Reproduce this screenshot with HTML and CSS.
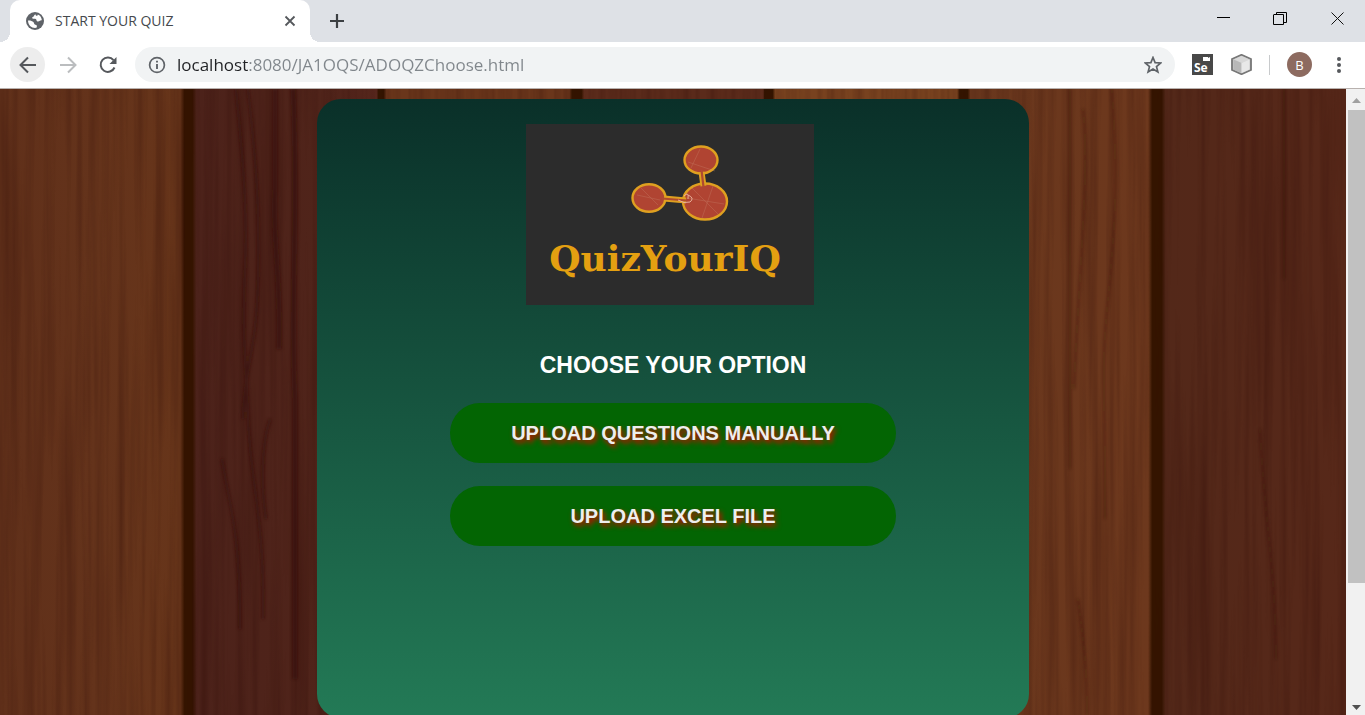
FILE: index.html
```html
<!DOCTYPE html>
<html lang="en">
<head>
<meta charset="utf-8">
<meta name="viewport" content="width=device-width, initial-scale=1">
<title>START YOUR QUIZ</title>
<link rel="stylesheet" href="styles.css">
</head>
<body>
<div class="browser">
  <header class="tab-strip">
    <div class="tab">
      <svg class="icon-18" viewBox="0 0 18 18" aria-hidden="true"><circle cx="9" cy="9" r="9" fill="#5f6368"/><path d="M9.500 2.200C7.500 3 8.500 4.300 6.800 5C5.600 5.500 6 6.700 7.300 6.700C9 6.600 10.400 6.700 10.500 8.200C10.600 9.500 12.500 9.800 13.500 9C14.500 8.200 15.500 8.500 15.800 8C15.600 5.500 14 3.500 11.800 2.600C11.700 4.500 9.500 4 9.500 2.200ZM2 8.500C4 8.200 6.200 8.800 7.400 10C8.500 11.200 7.800 12.500 9.300 12.700C11 12.800 11.300 14 10.500 15.800C6 16.600 2 13.500 2 8.500Z" fill="#fff"/></svg>
      <span class="tab-title">START YOUR QUIZ</span>
      <button class="plain" aria-label="Close tab"><svg class="icon-18" viewBox="0 0 18 18"><path d="M4.500 4.500L13.500 13.500M13.500 4.500L4.500 13.500" stroke="#55585c" stroke-width="1.800"/></svg></button>
    </div>
    <button class="plain new-tab" aria-label="New tab"><svg class="icon-18" viewBox="0 0 18 18"><path d="M2 9H16M9 2V16" stroke="#3c4043" stroke-width="2.200"/></svg></button>
    <div class="window-controls">
      <button class="plain" aria-label="Minimize"><svg class="icon-14" viewBox="0 0 14 14"><path d="M0 6.500H13" stroke="#000"/></svg></button>
      <button class="plain" aria-label="Restore"><svg class="icon-14" viewBox="0 0 14 14"><path d="M0 3.500H9.500V13.500H-.5V3.500M2.500 3V1.500H12.500V11.500H10" fill="none" stroke="#000"/></svg></button>
      <button class="plain" aria-label="Close"><svg class="icon-14" viewBox="0 0 14 14"><path d="M.5 1.500L12.500 13.500M12.500 1.500L.5 13.500" stroke="#111"/></svg></button>
    </div>
  </header>
  <nav class="toolbar" aria-label="Browser">
    <div class="nav-buttons">
      <button class="plain round current" aria-label="Back"><svg class="icon-18" viewBox="0 0 18 18"><path d="M17 9H2M9 1.500L1.500 9L9 16.500" fill="none" stroke="#55585c" stroke-width="2"/></svg></button>
      <button class="plain round" aria-label="Forward"><svg class="icon-18" viewBox="0 0 18 18"><path d="M1 9H16M9 1.500L16.500 9L9 16.500" fill="none" stroke="#bbbdbf" stroke-width="2"/></svg></button>
      <button class="plain round" aria-label="Reload"><svg class="icon-18" viewBox="0 0 18 18"><path d="M15.500 11.500A7.200 7.200 0 1 1 14.500 4.200" fill="none" stroke="#55585c" stroke-width="2"/><path d="M17.500 1V8H10.500Z" fill="#55585c"/></svg></button>
    </div>
    <div class="address">
      <svg class="icon-18" viewBox="0 0 18 18" aria-hidden="true"><circle cx="9" cy="9" r="7.400" fill="none" stroke="#5f6368" stroke-width="1.700"/><path d="M9 8V13M9 4.800V6.600" stroke="#5f6368" stroke-width="1.900"/></svg>
      <input class="url" type="text" aria-label="Address" value="localhost:8080/JA1OQS/ADOQZChoose.html">
      <button class="plain" aria-label="Bookmark"><svg class="icon-18" viewBox="0 0 18 18"><path d="M9 1.500L11.100 6.600L16.800 7L12.500 10.600L13.900 16L9 13.100L4.100 16L5.500 10.600L1.200 7L6.900 6.600Z" fill="none" stroke="#5f6368" stroke-width="1.700"/></svg></button>
    </div>
    <div class="extensions">
      <button class="plain" aria-label="Selenium"><svg class="icon-21" viewBox="0 0 21 21"><path d="M0 0H21V21H0Z" fill="#484848"/><path d="M11 3H16V4L18 3V7H11Z" fill="#fff"/><text x="2" y="18" class="selenium">Se</text></svg></button>
      <button class="plain" aria-label="Extension"><svg class="icon-21" viewBox="0 0 21 21"><path d="M10.500 .8L20 5V16L10.500 20.200L1 16V5Z" fill="#c9c9c9" stroke="#777" stroke-width="1.800"/><path d="M10.500 2L18.500 5.400L10.500 9L2.500 5.400Z" fill="#d8d8d8"/><path d="M10.500 9V19L2.500 15.500V5.600Z" fill="#b8b8b8"/><path d="M10.500 9L18.500 5.600V15.500L10.500 19Z" fill="#e8e8e8"/></svg></button>
      <span class="divider"></span>
      <button class="plain avatar" aria-label="Profile">B</button>
      <button class="plain menu" aria-label="Menu"><svg class="icon-18" viewBox="0 0 18 18" fill="#55585c"><circle cx="9" cy="3" r="2"/><circle cx="9" cy="9" r="2"/><circle cx="9" cy="15" r="2"/></svg></button>
    </div>
  </nav>
  <div class="viewport">
    <main class="page">
      <svg class="wood" viewBox="0 0 1346 626" preserveAspectRatio="none" aria-hidden="true">
        <defs>
          <filter id="grain" x="0" y="0" width="100%" height="100%" color-interpolation-filters="sRGB">
            <feTurbulence type="fractalNoise" baseFrequency="0.11 0.003" numOctaves="3" seed="8"/>
            <feColorMatrix values="0 0 0 0 .18  0 0 0 0 .04  0 0 0 0 .02  1 0 0 0 -.38"/>
          </filter>
          <linearGradient id="planks" gradientUnits="userSpaceOnUse" x1="0" y1="0" x2="1346" y2="0">
            <stop offset="0" stop-color="#60301a"/><stop offset=".07" stop-color="#64331b"/><stop offset=".134" stop-color="#67351a"/><stop offset=".137" stop-color="#351400"/><stop offset=".143" stop-color="#351400"/><stop offset=".146" stop-color="#4c221a"/><stop offset=".24" stop-color="#50241a"/><stop offset=".28" stop-color="#57271d"/><stop offset=".281" stop-color="#341500"/><stop offset=".285" stop-color="#341500"/><stop offset=".287" stop-color="#6a361b"/><stop offset=".423" stop-color="#6a361b"/><stop offset=".425" stop-color="#341500"/><stop offset=".432" stop-color="#341500"/><stop offset=".434" stop-color="#5b2b1b"/><stop offset=".567" stop-color="#5b2b1b"/><stop offset=".568" stop-color="#341500"/><stop offset=".574" stop-color="#341500"/><stop offset=".576" stop-color="#78421f"/><stop offset=".711" stop-color="#78421f"/><stop offset=".713" stop-color="#341500"/><stop offset=".719" stop-color="#341500"/><stop offset=".721" stop-color="#69371d"/><stop offset=".853" stop-color="#6d381d"/><stop offset=".856" stop-color="#341500"/><stop offset=".863" stop-color="#341500"/><stop offset=".866" stop-color="#532819"/><stop offset="1" stop-color="#572819"/>
          </linearGradient>
          <filter id="soft" x="-5%" width="110%"><feGaussianBlur stdDeviation="1.500"/></filter>
        </defs>
        <path d="M0 0H1346V626H0Z" fill="url(#planks)"/>
        <g filter="url(#grain)" opacity=".6"><path d="M0 0H1346V626H0Z"/></g>
        <path d="M185 0H192V626H185ZM1152 0H1162V626H1152Z" fill="#351400" opacity=".7"/>
        <g fill="none" stroke="#350d08" stroke-width="3" opacity=".6" filter="url(#soft)">
          <path d="M236 0C241 55 248 110 245 180S246 270 248 330S265 430 263 530M248 0C255 65 260 110 258 190S245 270 243 330"/>
          <path d="M275 0V100C272 150 281 180 279 260M293 0C299 130 290 210 295 310V590" stroke-width="5"/>
          <path d="M270 330C260 360 262 405 266 430M222 370C230 420 240 440 240 540"/>
          <path d="M1083 20C1090 80 1079 180 1074 300M1112 0C1118 90 1116 130 1108 210S1106 300 1105 430M1070 0V380M1078 510C1083 550 1087 570 1087 626M1284 0V190M1260 340C1265 440 1275 470 1276 570" stroke-width="2" opacity=".7"/>
        </g>
      </svg>
      <section class="panel">
        <div class="logo">
          <svg class="molecule" viewBox="0 0 100 78" aria-hidden="true">
            <g fill="#b04432" stroke="#dfa020" stroke-width="2.400"><ellipse cx="71" cy="16" rx="16.500" ry="13.500"/><ellipse cx="19" cy="54" rx="16.500" ry="13.800"/><ellipse cx="75" cy="57.500" rx="22" ry="18"/></g>
            <path d="M71.500 28L73.500 42M34 54.500L56 56.500" stroke="#dfa020" stroke-width="6"/><path d="M71.500 26L73.500 43M32 54.500L57 56.500" stroke="#b04a30" stroke-width="2.200"/>
            <path d="M70 5L61 24M58 18L85 27M11 44L28 61M7 51L30 56M83 42L72 74M57 54L94 60M62 44L88 70" stroke="#d29b82" stroke-width=".6" opacity=".4"/>
            <path d="M48 56Q54 60 60 58Q65 54 58 51M54 52Q59 47 58 55" fill="none" stroke="#e9b19b"/>
          </svg>
          <span class="brand">QuizYourIQ</span>
        </div>
        <h1 class="heading">CHOOSE YOUR OPTION</h1>
        <div class="options">
          <button class="option">UPLOAD QUESTIONS MANUALLY</button>
          <button class="option">UPLOAD EXCEL FILE</button>
        </div>
      </section>
    </main>
    <div class="scrollbar" aria-hidden="true">
      <svg class="arrow" viewBox="0 0 17 21"><path d="M4 14L8.500 9L13 14Z" fill="#a0a0a0"/></svg>
      <div class="track"><div class="thumb"></div></div>
      <svg class="arrow" viewBox="0 0 17 21"><path d="M4 11L8.500 16L13 11Z" fill="#505050"/></svg>
    </div>
  </div>
</div>
</body>
</html>
```
FILE: styles.css
```css
* { box-sizing: border-box; }
body { margin: 0; font-family: "Open Sans", "Noto Sans", sans-serif; }
svg { display: block; flex: none; }
.browser { display: flex; flex-direction: column; height: 100vh; overflow: hidden; }
.plain { display: flex; align-items: center; justify-content: center; padding: 0; border: 0; background: transparent; color: inherit; font: inherit; }
.icon-14 { width: 14px; height: 14px; overflow: visible; }
.icon-18 { width: 18px; height: 18px; }
.icon-21 { width: 21px; height: 21px; }

.tab-strip { display: flex; flex: none; height: 42px; padding-left: 10px; background: #dee1e6; }
.tab { position: relative; display: flex; align-items: center; gap: 11px; width: 300px; padding: 0 11px 0 16px; border-radius: 10px 10px 0 0; background: #fff; }
.tab::before, .tab::after { content: ""; position: absolute; bottom: 0; width: 10px; height: 10px; }
.tab::before { right: 100%; background: radial-gradient(circle at 0 0, transparent 10px, #fff 10px); }
.tab::after { left: 100%; background: radial-gradient(circle at 100% 0, transparent 10px, #fff 10px); }
.tab-title { flex: 1; padding-bottom: 2px; color: #45494d; font-size: 14px; font-weight: 400; }
.new-tab { width: 54px; }
.window-controls { display: flex; align-items: center; gap: 43px; margin-left: auto; padding: 0 20px 6px 0; }

.toolbar { display: flex; flex: none; align-items: center; height: 47px; padding: 0 17px 1px 10px; border-bottom: 1px solid #b8b1ae; background: #fff; }
.nav-buttons { display: flex; gap: 5px; }
.round { width: 35px; height: 35px; border-radius: 50%; }
.current { background: #ededed; }
.address { display: flex; flex: 1; align-items: center; gap: 11px; height: 35px; margin-left: 10px; padding: 0 13px; border-radius: 18px; background: #f1f3f4; }
.url { flex: 1; min-width: 0; padding: 0; border: 0; outline: 0; background: linear-gradient(90deg, #202124 71px, #80868b 71px); -webkit-background-clip: text; background-clip: text; color: transparent; font: 400 17px/26px "Open Sans", "Noto Sans", sans-serif; }
.extensions { display: flex; align-items: center; gap: 18px; margin-left: 17px; }
.divider { width: 1px; height: 20px; margin: 0 -1px 0 -1px; background: #c8cacc; }
.avatar { width: 25px; height: 25px; border-radius: 50%; background: #8d6b60; color: #fff; font-size: 13px; }
.menu { width: 18px; }
.selenium { fill: #fff; font: 700 12px "Open Sans", sans-serif; }

.viewport { display: flex; flex: 1; min-height: 0; }
.page { position: relative; display: flex; flex: 1; justify-content: center; padding-top: 10px; overflow: hidden; background: #55251a; }
.wood { position: absolute; inset: 0; width: 100%; height: 100%; }
.panel { position: relative; display: flex; flex-direction: column; align-items: center; width: 52.9%; height: 619px; padding-top: 25px; border-radius: 24px; background: linear-gradient(#0a3029, #237a56); }
.logo { display: flex; flex-direction: column; align-items: center; width: 288px; height: 181px; margin-right: 6px; padding-top: 20px; background: #2c2c2c; }
.molecule { width: 100px; height: 78px; margin-left: 20px; }
.brand { color: #e4a011; font: 700 36px/44px "DejaVu Serif", serif; margin-top: 14px; margin-right: 10px; }
.heading { margin: 44px 0 22px; color: #fff; font: 700 23px/32px "Liberation Sans", sans-serif; }
.options { display: flex; flex-direction: column; gap: 23px; width: 446px; max-width: 90%; }
.option { height: 60px; border: 0; border-radius: 30px; background: #036503; color: #eee; font: 700 20px/24px "Liberation Sans", sans-serif; text-shadow: 2px 3px 5px #e00000; }

.scrollbar { display: flex; flex-direction: column; width: 19px; border-left: 2px solid #f1f1f1; background: #f1f1f1; }
.arrow { width: 17px; height: 21px; }
.track { flex: 1; }
.thumb { height: 81%; background: #c1c1c1; }
```
